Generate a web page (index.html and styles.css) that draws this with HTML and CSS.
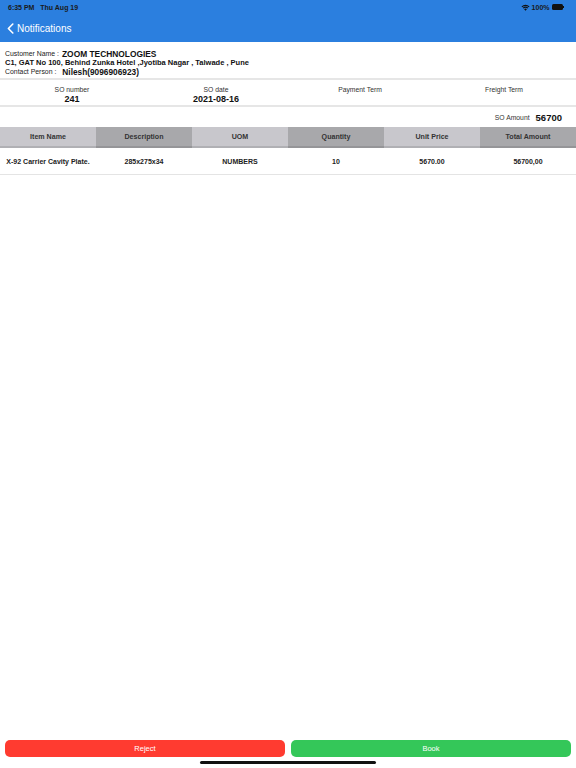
FILE: index.html
```html
<!DOCTYPE html>
<html>
<head>
<meta charset="utf-8">
<link rel="stylesheet" href="styles.css">
</head>
<body>
<div class="page">
  <header class="topbar">
    <div class="status">
      <span class="time">6:35 PM&nbsp;&nbsp;&nbsp;Thu Aug 19</span>
      <span class="status-right">
        <svg class="wifi" width="9" height="7" viewBox="0 0 18 14"><path d="M9 13.5 L6.2 10.4 A4 4 0 0 1 11.8 10.4 Z" fill="#111"/><path d="M3.6 7.6 A7.8 7.8 0 0 1 14.4 7.6 L12.9 9.2 A5.6 5.6 0 0 0 5.1 9.2 Z" fill="#111"/><path d="M1 4.9 A11.6 11.6 0 0 1 17 4.9 L15.5 6.5 A9.4 9.4 0 0 0 2.5 6.5 Z" fill="#111"/></svg>
        <span class="pct">100%</span>
        <span class="battery"><span class="batt-body"></span><span class="batt-tip"></span></span>
      </span>
    </div>
    <div class="nav">
      <svg class="chev" width="7" height="11" viewBox="0 0 7 11"><path d="M5.8 1 L1.4 5.5 L5.8 10" fill="none" stroke="#fff" stroke-width="1.6" stroke-linecap="round" stroke-linejoin="round"/></svg>
      <span class="nav-title">Notifications</span>
    </div>
  </header>

  <section class="customer">
    <div class="line1"><span class="lbl">Customer Name :</span> <span class="cname">ZOOM TECHNOLOGIES</span></div>
    <div class="line2">C1, GAT No 100, Behind Zunka Hotel ,Jyotiba Nagar , Talwade , Pune</div>
    <div class="line3"><span class="lbl">Contact Person :</span> <span class="contact">Nilesh(9096906923)</span></div>
  </section>

  <section class="so-row">
    <div class="so-cell"><div class="so-lbl">SO number</div><div class="so-val">241</div></div>
    <div class="so-cell"><div class="so-lbl">SO date</div><div class="so-val">2021-08-16</div></div>
    <div class="so-cell"><div class="so-lbl">Payment Term</div><div class="so-val"></div></div>
    <div class="so-cell"><div class="so-lbl">Freight Term</div><div class="so-val"></div></div>
  </section>

  <section class="amount">
    <span class="amt-lbl">SO Amount</span><span class="amt-val">56700</span>
  </section>

  <section class="table">
    <div class="thead">
      <div class="th light">Item Name</div>
      <div class="th dark">Description</div>
      <div class="th light">UOM</div>
      <div class="th dark">Quantity</div>
      <div class="th light">Unit Price</div>
      <div class="th dark">Total Amount</div>
    </div>
    <div class="trow">
      <div class="td">X-92 Carrier Cavity Plate.</div>
      <div class="td">285x275x34</div>
      <div class="td">NUMBERS</div>
      <div class="td">10</div>
      <div class="td">5670.00</div>
      <div class="td">56700,00</div>
    </div>
  </section>

  <footer class="actions">
    <div class="buttons">
      <button class="btn reject">Reject</button>
      <button class="btn book">Book</button>
    </div>
    <div class="home"></div>
  </footer>
</div>
</body>
</html>
```

FILE: styles.css
```css
* { box-sizing: border-box; }
html, body { margin: 0; padding: 0; }
body {
  width: 576px;
  height: 768px;
  background: #ffffff;
  font-family: "Liberation Sans", Arial, sans-serif;
  color: #111;
  overflow: hidden;
}
.page {
  display: flex;
  flex-direction: column;
  height: 768px;
}
.topbar {
  background: #2b7fdf;
  height: 42px;
  display: flex;
  flex-direction: column;
}
.status {
  height: 15px;
  display: flex;
  justify-content: space-between;
  align-items: center;
  padding: 0 12px 1px 8px;
  font-size: 7px;
  font-weight: bold;
  color: #1a1a1a;
}
.status-right {
  display: flex;
  align-items: center;
  gap: 2px;
}
.pct { font-size: 7px; }
.battery { display: flex; align-items: center; }
.batt-body {
  width: 11px; height: 5.5px; background: #111; border-radius: 1.5px;
}
.batt-tip { width: 1px; height: 2.5px; background: #111; margin-left: 0.5px; }
.nav {
  flex: 1;
  display: flex;
  align-items: center;
  padding: 0 0 0 7px;
  gap: 3px;
  margin-top: -1px;
}
.nav-title {
  color: #fff;
  font-size: 10px;
}
.customer {
  padding: 7px 5px 0 5px;
  height: 38px;
  border-bottom: 2px solid #e6e6e6;
}
.customer .lbl {
  font-size: 6.9px;
  color: #222;
}
.line1 { height: 9px; display: flex; align-items: center; gap: 3px; }
.cname { font-size: 8.4px; font-weight: bold; }
.line2 { height: 9px; font-size: 7.5px; font-weight: bold; line-height: 9px; }
.line3 { height: 9px; display: flex; align-items: center; gap: 6px; }
.contact { font-size: 8.3px; font-weight: bold; }
.so-row {
  display: grid;
  grid-template-columns: repeat(4, 1fr);
  height: 27px;
  border-bottom: 2px solid #e6e6e6;
  padding-top: 5px;
}
.so-cell { text-align: center; }
.so-lbl { font-size: 6.8px; color: #333; height: 9px; line-height: 9px; }
.so-val { font-size: 9px; font-weight: bold; line-height: 10px; }
.amount {
  height: 20px;
  display: flex;
  justify-content: flex-end;
  align-items: center;
  padding-right: 14px;
  gap: 6px;
}
.amt-lbl { font-size: 6.8px; color: #333; }
.amt-val { font-size: 9.5px; font-weight: bold; }
.thead {
  display: grid;
  grid-template-columns: repeat(6, 1fr);
  height: 21px;
}
.th {
  display: flex;
  align-items: center;
  justify-content: center;
  font-size: 7.1px;
  font-weight: bold;
  color: #333;
  border-bottom: 2px solid #9a9a9a;
}
.th.light { background: #c8c7cc; border-bottom-color: #b0b0b4; }
.th.dark { background: #a8a8ab; border-bottom-color: #959598; }
.trow {
  display: grid;
  grid-template-columns: repeat(6, 1fr);
  height: 27px;
  border-bottom: 1px solid #e4e4e4;
}
.td {
  display: flex;
  align-items: center;
  justify-content: center;
  font-size: 7px;
  font-weight: bold;
  color: #222;
}
.actions {
  margin-top: auto;
  padding: 0 5px 4px 5px;
  display: flex;
  flex-direction: column;
  align-items: center;
}
.buttons {
  width: 100%;
  display: flex;
  gap: 6px;
}
.btn {
  flex: 1;
  height: 17px;
  border: none;
  border-radius: 5px;
  color: #fff;
  font-family: "Liberation Sans", Arial, sans-serif;
  font-size: 7.5px;
  padding: 0;
}
.reject { background: #ff3b30; }
.book { background: #34c759; }
.home {
  margin-top: 4px;
  width: 176px;
  height: 3px;
  border-radius: 2px;
  background: #111;
}
```
